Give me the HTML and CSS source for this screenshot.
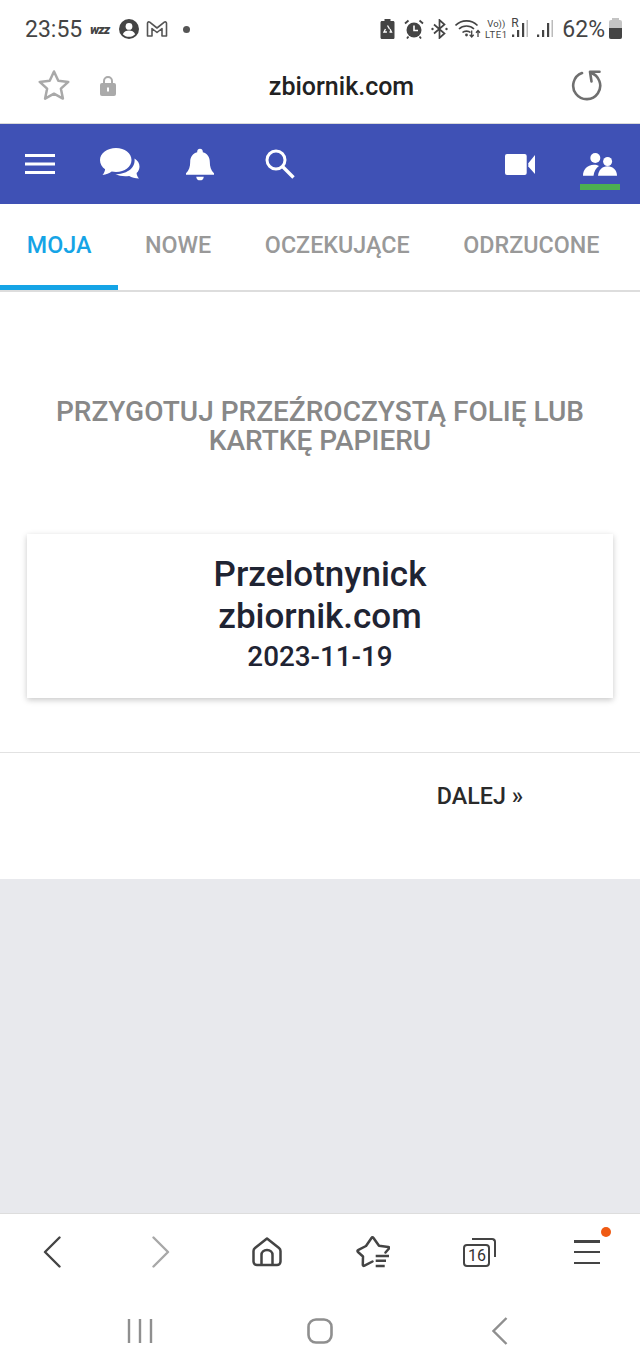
FILE: index.html
```html
<!DOCTYPE html>
<html lang="pl">
<head>
    <meta charset="UTF-8">
    <meta name="viewport" content="width=device-width, initial-scale=1.0">
    <title>zbiornik.com</title>
    <link rel="stylesheet" href="styles.css">
</head>
<body>
    <div class="phone">
        <div class="status-bar">
            <div class="status-left">
                <span class="clock">23:55</span>
                <span class="wizz">wzz</span>
                <svg class="st-person" width="20" height="20" viewBox="0 0 20 20"><circle cx="10" cy="10" r="10" fill="#444"/><circle cx="10" cy="7.4" r="3.4" fill="#fff"/><path d="M3.800 15.200c1.200-2.600 3.600-3.600 6.200-3.600s5 1 6.200 3.600c-1.500 1.600-3.800 2.600-6.200 2.600s-4.700-1-6.200-2.600z" fill="#fff"/></svg>
                <svg class="st-mail" width="22" height="18" viewBox="0 0 22 18"><path d="M1.500 16V3.200c0-1.300 1.300-1.700 2.200-1L11 8l7.300-5.800c.9-.7 2.200-.3 2.200 1V16h-4.500V8.500L11 12.500 6 8.500V16z" fill="none" stroke="#555" stroke-width="1.600" stroke-linejoin="round"/></svg>
                <span class="dot"></span>
            </div>
            <div class="status-right">
                <svg width="15" height="20" viewBox="0 0 15 20"><path d="M4.500 0h6v2h2.500c1 0 1.500.6 1.500 1.500v15c0 1-.6 1.500-1.500 1.500H2c-1 0-1.500-.6-1.500-1.500v-15C.5 2.600 1 2 2 2h2.500z" fill="#444"/><path d="M7.500 6.500l2 3.300M5.500 10l-1.600 3h3M9.500 13h2l-1.500-3" fill="none" stroke="#fff" stroke-width="1.300"/></svg>
                <svg class="st-alarm" width="20" height="20" viewBox="0 0 20 20"><circle cx="10" cy="11" r="7.500" fill="#444"/><path d="M10 6.500V11.500H14" fill="none" stroke="#fff" stroke-width="1.600"/><path d="M1 4.500L4.500 1.500M19 4.500L15.500 1.500M4.500 17.500L3 19.500M15.500 17.500L17 19.500" stroke="#444" stroke-width="1.800"/></svg>
                <svg class="st-bt" width="17" height="20" viewBox="0 0 17 20"><path d="M3 5.500L13.500 14.500 8.500 19V1L13.500 5.500 3 14.500" fill="none" stroke="#444" stroke-width="1.700"/><circle cx="1.500" cy="10" r="1.200" fill="#444"/><circle cx="15.500" cy="10" r="1.200" fill="#444"/></svg>
                <svg class="st-wifi" width="30" height="20" viewBox="0 0 30 20"><path d="M.5 6.500C6.500 .3 16.500 .3 22.500 6.500M4 10C8 6 15 6 19 10M7.500 13.500C9.500 11.600 13.500 11.600 15.500 13.500" fill="none" stroke="#444" stroke-width="1.600"/><circle cx="11.500" cy="16" r="1.400" fill="#444"/><path d="M16.700 11.500v6.500M14.700 15.800l2 2.300 2-2.300M23 18v-6.500M21 13.700l2-2.300 2 2.300" fill="none" stroke="#444" stroke-width="1.300"/></svg>
                <span class="volte"><span>Vo))</span><span class="volte-lte">LTE1</span></span>
                <span class="signal-r">R</span>
                <svg class="bars-r" width="17" height="20" viewBox="0 0 17 20"><path d="M0 15.500h2.200v2.500H0zM5 11h2.200v7H5zM10 4h2.200v14H10z" fill="#444"/><path d="M14.500 1H16v17h-1.500z" fill="#bbb"/></svg>
                <svg class="bars" width="17" height="20" viewBox="0 0 17 20"><path d="M0 15.500h2.200v2.500H0zM5 11h2.200v7H5zM10 4h2.200v14H10z" fill="#444"/><path d="M14.500 1H16v17h-1.500z" fill="#bbb"/></svg>
                <span class="battery-text">62%</span>
                <span class="battery"><span class="battery-fill"></span></span>
            </div>
        </div>

        <div class="url-bar">
            <svg class="url-star" width="34" height="34" viewBox="0 0 34 34"><path d="M17 2.500l4.300 9.200 10 1.200-7.400 6.800 2 9.900L17 24.700l-8.900 4.900 2-9.900-7.400-6.800 10-1.200z" fill="none" stroke="#a9a9a9" stroke-width="2.500" stroke-linejoin="round"/></svg>
            <svg class="url-lock" width="16" height="22" viewBox="0 0 16 22"><path d="M4 9V6a4 4 0 0 1 8 0v3" fill="none" stroke="#aaa" stroke-width="2"/><rect y="8" width="16" height="13" rx="2" fill="#aaa"/><rect x="7" y="12.500" width="2" height="4" fill="#fff"/></svg>
            <span class="url-text">zbiornik.com</span>
            <svg class="url-reload" width="32" height="32" viewBox="0 0 32 32"><path d="M11 3A13.500 13.500 0 1 0 19.500 2.700" fill="none" stroke="#6f6f6f" stroke-width="2.600" stroke-linecap="round"/><path d="M28.500 1.800H19L20.500 11.500" fill="none" stroke="#6f6f6f" stroke-width="2.600" stroke-linejoin="round" stroke-linecap="round"/></svg>
        </div>

        <nav class="top-nav">
            <div class="nav-group">
                <a class="nav-item">
                    <svg width="30" height="20" viewBox="0 0 30 20"><path d="M0 0h30v3H0zM0 8.500h30v3H0zM0 17h30v3H0z" fill="#fff"/></svg>
                </a>
                <a class="nav-item">
                    <svg width="40" height="32" viewBox="0 0 40 32"><path d="M16 0c8.800 0 15.500 5.200 15.500 12S24.800 24 16 24c-1.500 0-2.900-.2-4.300-.5C9.500 25.300 6 26.800 2.500 27c1.400-1.500 2.400-3.600 2.600-5.700C1.900 19 0 15.700 0 12 0 5.200 7.200 0 16 0z" fill="#fff"/><path d="M34.500 10.500c3.300 2 5 4.800 5 8 0 2.600-1 4.800-2.900 6.500.1 1.900.8 3.900 2.400 5.500-3.900-.1-7.400-1-9.800-2.500-5 .8-10 0-13.800-1.700 9.500 0 20.500-5 19.100-15.800z" fill="#fff"/></svg>
                </a>
                <a class="nav-item">
                    <svg width="28" height="33" viewBox="0 0 30 34"><path d="M15 0c1.800 0 3 1.200 3 3v.8c4.800 1.300 7.500 5.300 7.500 10.200 0 5.500 1.200 9 4.500 12.500v1.500H0v-1.500C3.300 23 4.500 19.500 4.500 14c0-4.900 2.700-8.900 7.500-10.200V3c0-1.800 1.200-3 3-3z" fill="#fff"/><path d="M11 30h8c0 2.300-1.700 4-4 4s-4-1.700-4-4z" fill="#fff"/></svg>
                </a>
                <a class="nav-item">
                    <svg width="30" height="30" viewBox="0 0 30 30"><circle cx="11" cy="11" r="9" fill="none" stroke="#fff" stroke-width="3"/><path d="M17.500 17.500L28.500 28.500" stroke="#fff" stroke-width="3.400"/></svg>
                </a>
            </div>
            <div class="nav-group">
                <a class="nav-item">
                    <svg width="30" height="21" viewBox="0 0 30 21"><rect width="21.700" height="21" rx="2" fill="#fff"/><path d="M23.300 9.300L30 1v19l-6.700-7.500z" fill="#fff"/></svg>
                </a>
                <a class="nav-item nav-item-active">
                    <svg width="34" height="23" viewBox="0 0 34 23"><circle cx="12.300" cy="5" r="5" fill="#fff"/><circle cx="24.600" cy="8.500" r="4.500" fill="#fff"/><path d="M0 22.700c0-6 4-11 11-11 2 0 3.500.5 5 1.200-3 2-5 5.500-5.500 9.800z" fill="#fff"/><path d="M15 22.700c.5-5.500 4-9.500 9.500-9.500s9.500 4 9.500 9.500z" fill="#fff"/></svg>
                </a>
            </div>
        </nav>

        <div class="tabs">
            <a class="tab tab-active">MOJA</a>
            <a class="tab">NOWE</a>
            <a class="tab">OCZEKUJĄCE</a>
            <a class="tab">ODRZUCONE</a>
        </div>

        <main class="content">
            <h2 class="prompt">PRZYGOTUJ PRZEŹROCZYSTĄ FOLIĘ LUB KARTKĘ PAPIERU</h2>
            <div class="card">
                <div class="card-name">Przelotnynick</div>
                <div class="card-name">zbiornik.com</div>
                <div class="card-date">2023-11-19</div>
            </div>
            <div class="next-row">
                <a class="next-link">DALEJ »</a>
            </div>
        </main>

        <div class="gray-fill"></div>

        <div class="browser-bar">
            <a class="browser-item">
                <svg class="chevron-back" width="18" height="32" viewBox="0 0 18 32"><path d="M16.500 1.500L2 16l14.500 14.500" fill="none" stroke="#444" stroke-width="2.400" stroke-linecap="round" stroke-linejoin="round"/></svg>
            </a>
            <a class="browser-item">
                <svg class="chevron-forward" width="18" height="32" viewBox="0 0 18 32"><path d="M1.500 1.500L16 16 1.500 30.500" fill="none" stroke="#a8a8a8" stroke-width="2.400" stroke-linecap="round" stroke-linejoin="round"/></svg>
            </a>
            <a class="browser-item">
                <svg width="30" height="30" viewBox="0 0 30 30"><path d="M15 1.500L27 11c1 .8 1.500 1.800 1.500 3v10.500c0 2-1.500 3.500-3.500 3.500H5c-2 0-3.500-1.500-3.500-3.500V14c0-1.200.5-2.200 1.500-3z" fill="none" stroke="#444" stroke-width="2.500" stroke-linejoin="round"/><path d="M9.500 28V18c0-3 2.200-5 5.500-5s5.500 2 5.500 5v10" fill="none" stroke="#444" stroke-width="2.500"/></svg>
            </a>
            <a class="browser-item">
                <svg width="34" height="32" viewBox="0 0 34 32"><path d="M29.500 16.500L33 12.500C33.500 11.800 33.200 11.200 32.300 11L23 9.800 17.500 2C16.800 1 16 1 15.500 2L10 10 2.500 13.800C1.300 14.400 1.200 15.200 2 16L7 20.500 6.800 28.500C6.800 29.800 7.500 30.200 8.500 29.700L16.500 25.500" fill="none" stroke="#444" stroke-width="2.500" stroke-linecap="round" stroke-linejoin="round"/><path d="M19.700 20H33M19.700 24.700H30M19.700 30H28.700" stroke="#444" stroke-width="2.500"/></svg>
            </a>
            <a class="browser-item">
                <span class="tabs-icon">
                    <span class="tabs-icon-back"></span>
                    <span class="tabs-icon-front">16</span>
                </span>
            </a>
            <a class="browser-item">
                <span class="menu-icon">
                    <span class="menu-line"></span>
                    <span class="menu-line"></span>
                    <span class="menu-line"></span>
                    <span class="menu-badge"></span>
                </span>
            </a>
        </div>

        <div class="system-bar">
            <a class="system-item">
                <svg width="26" height="26" viewBox="0 0 26 26"><path d="M2 1v24M13 1v24M24 1v24" stroke="#8f8f8f" stroke-width="2.400"/></svg>
            </a>
            <a class="system-item">
                <svg width="26" height="26" viewBox="0 0 26 26"><rect x="1.500" y="1.500" width="23" height="23" rx="7.500" fill="none" stroke="#8f8f8f" stroke-width="2.600"/></svg>
            </a>
            <a class="system-item">
                <svg width="16" height="28" viewBox="0 0 16 28"><path d="M14.500 1L1.500 14l13 13" fill="none" stroke="#8f8f8f" stroke-width="2.400"/></svg>
            </a>
        </div>
    </div>
</body>
</html>
```

FILE: styles.css
```css
* {
    box-sizing: border-box;
}
body {
    margin: 0;
    font-family: Roboto, "Liberation Sans", sans-serif;
    background-color: #fff;
}
svg {
    display: block;
}
.phone {
    width: 640px;
    height: 1372px;
    display: flex;
    flex-direction: column;
    overflow: hidden;
}
.status-bar {
    height: 56px;
    padding: 2px 18px 0 25px;
    display: flex;
    align-items: center;
    justify-content: space-between;
    color: #444;
}
.status-left {
    display: flex;
    align-items: center;
}
.clock {
    font-size: 23px;
    width: 58px;
}
.wizz {
    font-size: 13px;
    font-weight: 900;
    font-style: italic;
    letter-spacing: -1px;
    margin-left: 7px;
    width: 23px;
}
.st-person {
    margin-left: 6px;
}
.st-mail {
    margin-left: 7px;
}
.dot {
    width: 7px;
    height: 7px;
    margin-left: 15px;
    border-radius: 50%;
    background-color: #555;
}
.status-right {
    display: flex;
    align-items: center;
    gap: 6px;
}
.st-alarm {
    margin-left: 3px;
}
.st-bt {
    margin-left: 1px;
}
.st-wifi {
    margin-left: 1px;
}
.volte {
    display: flex;
    flex-direction: column;
    align-items: center;
    font-size: 9.500px;
    line-height: 11px;
    margin-left: -7px;
    width: 24px;
}
.volte-lte {
    letter-spacing: .6px;
}
.signal-r {
    font-size: 12px;
    margin: -13px -21px 0 -3px;
    width: 10px;
}
.bars-r {
    margin-left: 6px;
}
.bars {
    margin-left: 2px;
}
.battery-text {
    font-size: 23px;
    margin-left: 2px;
}
.battery {
    width: 13px;
    height: 19px;
    margin-left: -2px;
    margin-top: 1px;
    border-radius: 2px;
    background-color: #c4c4c4;
    display: flex;
    align-items: flex-end;
    position: relative;
}
.battery::before {
    content: "";
    position: absolute;
    top: -2px;
    left: 3px;
    width: 7px;
    height: 2px;
    background-color: #c4c4c4;
}
.battery-fill {
    width: 100%;
    height: 11px;
    border-radius: 0 0 2px 2px;
    background-color: #444;
}
.url-bar {
    height: 68px;
    padding: 0 37px 7px 37px;
    display: flex;
    align-items: center;
    border-bottom: 1px solid #d9d9d9;
    background-color: #fff;
}
.url-lock {
    margin-left: 29px;
}
.url-text {
    flex: 1;
    text-align: center;
    font-size: 25px;
    font-weight: 500;
    color: #222;
    padding-right: 4px;
}
.top-nav {
    height: 80px;
    display: flex;
    justify-content: space-between;
    background-color: #3f51b5;
}
.nav-group {
    display: flex;
}
.nav-item {
    width: 80px;
    height: 80px;
    display: flex;
    align-items: center;
    justify-content: center;
    position: relative;
}
.nav-item-active::after {
    content: "";
    position: absolute;
    left: 20px;
    bottom: 14px;
    width: 40px;
    height: 6px;
    background-color: #4caf50;
}
.tabs {
    height: 88px;
    display: flex;
    border-bottom: 2px solid #ddd;
    background-color: #fff;
}
.tab {
    height: 86px;
    padding: 0 26.800px;
    line-height: 82px;
    font-size: 23.300px;
    font-weight: 500;
    color: #999;
}
.tab-active {
    color: #15a4e6;
    border-bottom: 5px solid #15a4e6;
}
.content {
    height: 587px;
    padding-top: 105px;
    background-color: #fff;
}
.prompt {
    width: 540px;
    margin: 0 auto;
    text-align: center;
    font-size: 28px;
    line-height: 29px;
    font-weight: 500;
    color: #888;
}
.card {
    margin: 79px 27px 0;
    height: 164px;
    padding-top: 20px;
    text-align: center;
    background-color: #fff;
    box-shadow: 0 2px 6px rgba(0,0,0,0.22);
    color: #1f2433;
}
.card-name {
    font-size: 35px;
    line-height: 42px;
    font-weight: 500;
}
.card-date {
    font-size: 27.800px;
    line-height: 38px;
    font-weight: 500;
}
.next-row {
    margin-top: 54px;
    height: 60px;
    padding: 21px 117px 0 0;
    text-align: right;
    border-top: 1px solid #e2e2e2;
}
.next-link {
    font-size: 23.300px;
    line-height: 44px;
    font-weight: 500;
    color: #2a2a2a;
}
.gray-fill {
    height: 334px;
    background-color: #e8e9ed;
}
.browser-bar {
    height: 81px;
    padding-bottom: 4px;
    display: grid;
    grid-template-columns: repeat(6, 1fr);
    border-top: 1px solid #ddd;
    background-color: #fff;
}
.browser-item {
    display: flex;
    align-items: center;
    justify-content: center;
}
.chevron-back {
    margin-right: 3px;
}
.chevron-forward {
    margin-left: 3px;
}
.tabs-icon {
    width: 33px;
    height: 29px;
    position: relative;
}
.tabs-icon-back {
    position: absolute;
    top: 0;
    right: 0;
    width: 24px;
    height: 19px;
    border-top: 2.500px solid #444;
    border-right: 2.500px solid #444;
    border-top-right-radius: 4px;
}
.tabs-icon-front {
    position: absolute;
    left: 0;
    bottom: 0;
    width: 27px;
    height: 23px;
    border: 2.500px solid #444;
    border-radius: 4px;
    background-color: #fff;
    font-size: 16px;
    line-height: 19px;
    text-align: center;
    color: #333;
}
.menu-icon {
    width: 26px;
    height: 24px;
    display: flex;
    flex-direction: column;
    justify-content: space-between;
    position: relative;
}
.menu-line {
    height: 2.500px;
    background-color: #444;
}
.menu-badge {
    position: absolute;
    top: -13px;
    right: -11px;
    width: 10px;
    height: 10px;
    border-radius: 50%;
    background-color: #ef5a13;
}
.system-bar {
    flex: 1;
    padding-bottom: 4px;
    display: flex;
    justify-content: center;
    background-color: #fff;
}
.system-item {
    width: 180px;
    display: flex;
    align-items: center;
    justify-content: center;
}
```
